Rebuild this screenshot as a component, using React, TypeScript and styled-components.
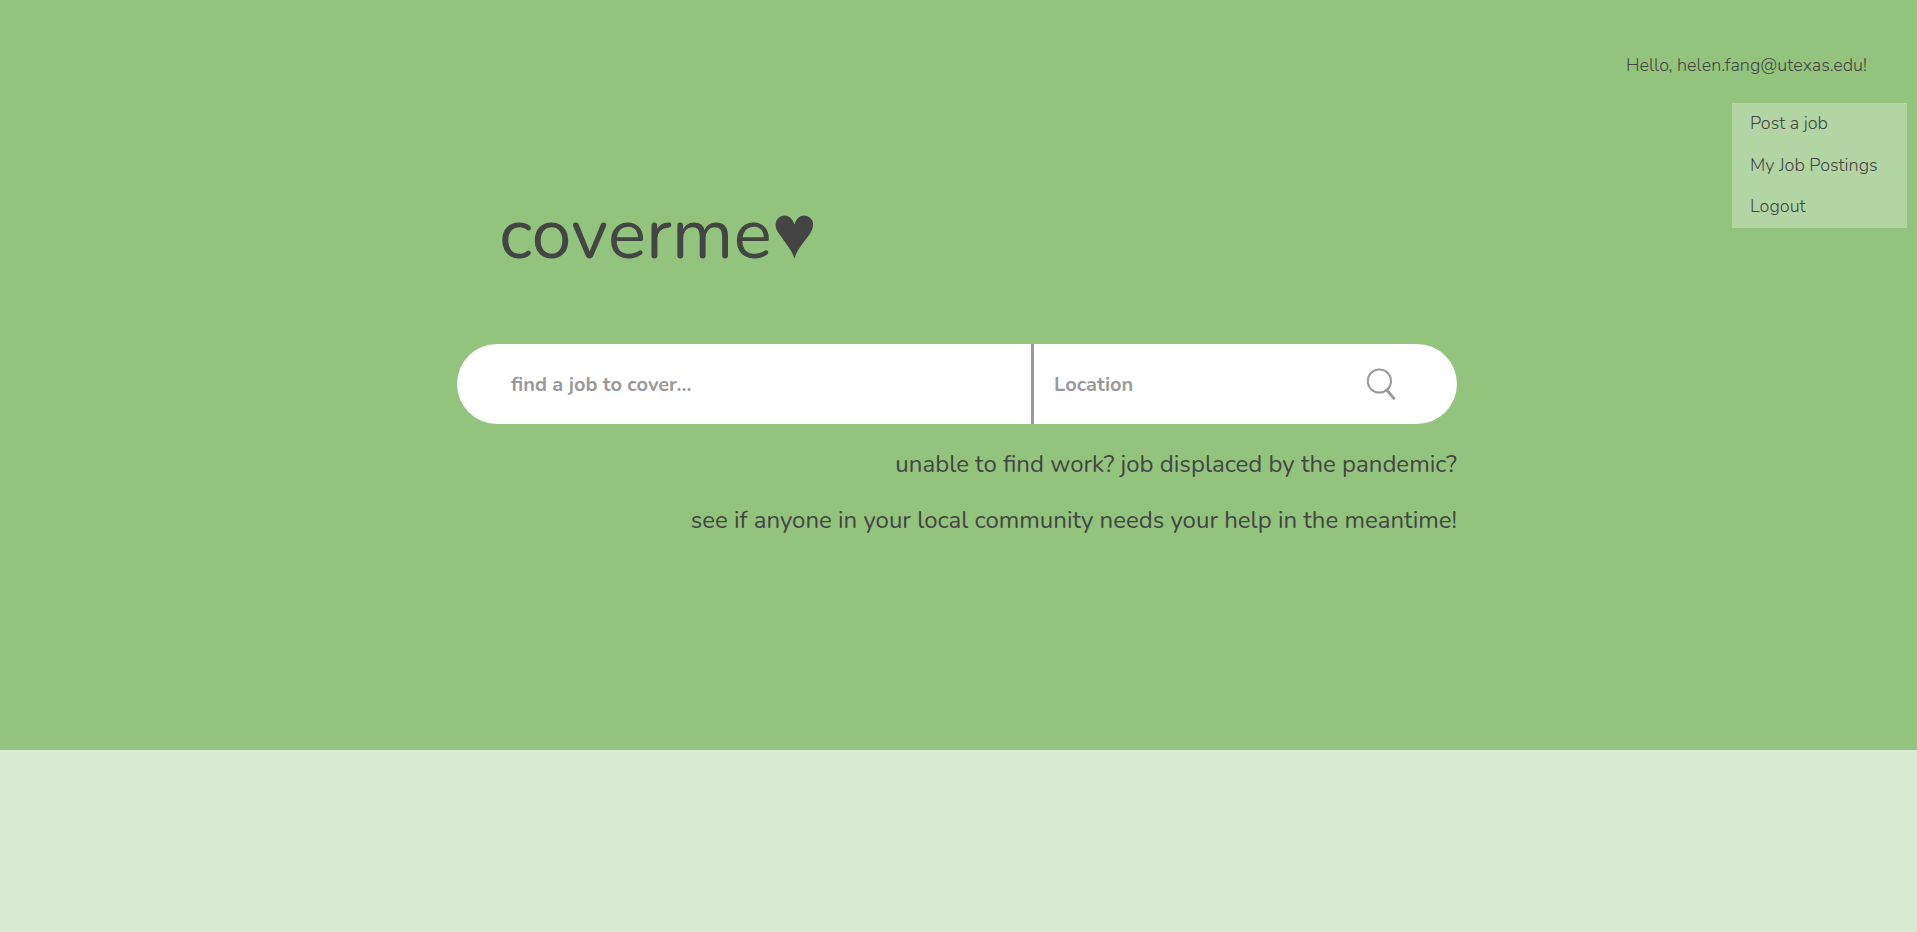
import React from "react";
import styled, { createGlobalStyle } from "styled-components";

const ink = "#444444";
const muted = "#999999";

const GlobalStyle = createGlobalStyle`
  *, *::before, *::after { box-sizing: border-box; }
  body {
    margin: 0;
    background: #d9ead3;
    color: ${ink};
    font-family: Nunito, Lato, "Liberation Sans", sans-serif;
    font-weight: 400;
  }
`;

const Hero = styled.main`
  position: relative;
  min-height: 750px;
  padding: 184px 27px 0 24px;
  background: #93c47d;
`;

const Account = styled.nav`
  position: absolute;
  top: 53px;
  right: 10px;
  display: flex;
  flex-direction: column;
  align-items: flex-end;
  gap: 25px;
  font-size: 18px;
  font-weight: 300;
  line-height: 25px;
`;

const Greeting = styled.span`
  padding-right: 40px;
`;

const Menu = styled.ul`
  display: grid;
  grid-auto-rows: 1fr;
  width: 175px;
  min-height: 125px;
  margin: 0;
  padding: 0;
  list-style: none;
  background: rgba(217, 234, 211, 0.45);
`;

const MenuLink = styled.a`
  display: block;
  padding: 8px 18px;
  color: inherit;
  text-decoration: none;
`;

const Content = styled.div`
  width: 100%;
  max-width: 1000px;
  margin: 0 auto;
`;

const Brand = styled.h1`
  margin: 0;
  padding-left: 42px;
  font-size: 72px;
  line-height: 100px;
  font-weight: 400;
`;

const Heart = styled.span`
  font-family: "Liberation Sans", sans-serif;
  font-size: 76px;
  line-height: 1;
`;

const SearchBar = styled.form`
  display: flex;
  height: 80px;
  margin-top: 60px;
  overflow: hidden;
  border-radius: 40px;
  background: #ffffff;
`;

const Field = styled.input<{ $divided?: boolean }>`
  flex: ${(p) => (p.$divided ? "1 1 0" : "0 1 574px")};
  min-width: 0;
  padding: 0 20px 0 ${(p) => (p.$divided ? "20px" : "54px")};
  border: 0;
  border-left: ${(p) => (p.$divided ? `3px solid ${muted}` : "0")};
  outline: 0;
  background: transparent;
  color: ${ink};
  font-family: inherit;
  font-size: 20px;
  font-weight: 700;

  &::placeholder {
    color: ${muted};
    opacity: 1;
  }
`;

const SearchButton = styled.button`
  display: flex;
  align-items: center;
  flex: none;
  padding: 0 60px 0 16px;
  border: 0;
  background: transparent;
  color: ${muted};
  cursor: pointer;
`;

const Tagline = styled.p`
  margin: 24px 0;
  font-size: 24px;
  line-height: 32px;
  text-align: right;
`;

const links = ["Post a job", "My Job Postings", "Logout"];

export default function App() {
  return (
    <>
      <GlobalStyle />
      <Hero>
        <Account aria-label="Account">
          <Greeting>Hello, helen.fang@utexas.edu!</Greeting>
          <Menu>
            {links.map((label) => (
              <li key={label}>
                <MenuLink href="#">{label}</MenuLink>
              </li>
            ))}
          </Menu>
        </Account>
        <Content>
          <Brand>
            coverme<Heart>♥</Heart>
          </Brand>
          <SearchBar role="search" onSubmit={(e) => e.preventDefault()}>
            <Field type="text" aria-label="Job" placeholder="find a job to cover..." />
            <Field type="text" aria-label="Location" placeholder="Location" $divided />
            <SearchButton type="submit" aria-label="Search">
              <svg width="32" height="34" viewBox="0 0 32 34" fill="none" stroke="currentColor">
                <circle cx="14.4" cy="14" r="11.6" strokeWidth="2" />
                <path d="M21.8 23 28.8 31.4" strokeWidth="2.8" strokeLinecap="round" />
              </svg>
            </SearchButton>
          </SearchBar>
          <Tagline>unable to find work? job displaced by the pandemic?</Tagline>
          <Tagline>see if anyone in your local community needs your help in the meantime!</Tagline>
        </Content>
      </Hero>
    </>
  );
}
